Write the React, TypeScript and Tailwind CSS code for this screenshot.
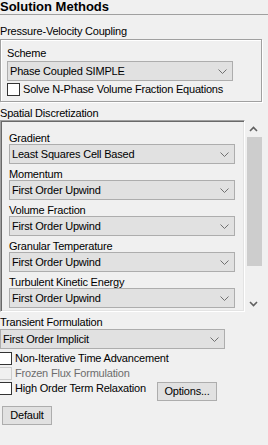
import React from "react";

const Chevron = () => (
  <svg width="9" height="5" viewBox="0 0 9 5" className="shrink-0">
    <path d="M0.5 0.5 L4.5 4.5 L8.5 0.5" fill="none" stroke="#707070" strokeWidth="1" />
  </svg>
);

function Select({ text, className }: { text: string; className: string }) {
  return (
    <div
      className={`flex h-[20px] items-center justify-between border border-[#adadad] bg-[#e1e1e1] pl-[2px] pr-[5px] ${className}`}
    >
      <span className="whitespace-nowrap">{text}</span>
      <Chevron />
    </div>
  );
}

function Check({ text, disabled, className }: { text: string; disabled?: boolean; className: string }) {
  return (
    <div className={`flex h-[15px] items-center gap-[3px] ${className}`}>
      <div
        className={`h-[13px] w-[13px] shrink-0 border ${
          disabled ? "border-[#cccccc] bg-[#f0f0f0]" : "border-[#333333] bg-white"
        }`}
      />
      <span className={`whitespace-nowrap ${disabled ? "text-[#6d6d6d]" : "text-black"}`}>{text}</span>
    </div>
  );
}

const fields: [string, string][] = [
  ["Gradient", "Least Squares Cell Based"],
  ["Momentum", "First Order Upwind"],
  ["Volume Fraction", "First Order Upwind"],
  ["Granular Temperature", "First Order Upwind"],
  ["Turbulent Kinetic Energy", "First Order Upwind"],
];

export default function App() {
  return (
    <div
      className="relative h-[445px] w-[268px] overflow-hidden bg-[#f0f0f0] text-[11px] leading-[13px] tracking-[-0.2px] text-black"
      style={{ fontFamily: '"Liberation Sans", Arial, sans-serif' }}
    >
      <div className="h-[15px] border-b border-[#a0a0a0]">
        <div className="text-[13px] font-bold leading-[14px] tracking-normal">Solution Methods</div>
      </div>

      <div className="mt-[10px] h-[13px]">Pressure-Velocity Coupling</div>
      <div className="mt-[1px] w-[262px] border border-[#a0a0a0] pb-[4px] pl-[6px] pt-[7px] shadow-[inset_1px_1px_0_#ffffff,1px_1px_0_#ffffff]">
        <div className="h-[13px]">Scheme</div>
        <Select text="Phase Coupled SIMPLE" className="mt-[1px] w-[226px]" />
        <Check text="Solve N-Phase Volume Fraction Equations" className="mt-[1px] h-[14px]" />
      </div>

      <div className="mt-[5px] h-[13px]">Spatial Discretization</div>
      <div className="flex h-[192px]">
        <div className="h-[192px] w-[245px] overflow-hidden border border-b-white border-l-[#a0a0a0] border-r-white border-t-[#a0a0a0] pl-[8px] pt-[11px] shadow-[inset_1px_1px_0_#696969,inset_-1px_-1px_0_#e3e3e3]">
          {fields.map(([label, value]) => (
            <div key={label} className="mb-[4px]">
              <div className="h-[12px] leading-[12px]">{label}</div>
              <Select text={value} className="w-[226px]" />
            </div>
          ))}
        </div>
        <div className="flex h-[192px] w-[17px] flex-col justify-between">
          <div>
            <div className="flex h-[17px] items-center justify-center">
              <svg width="9" height="6" viewBox="0 0 9 6">
                <path d="M1 5 L4.5 1.5 L8 5" fill="none" stroke="#606060" strokeWidth="1.6" />
              </svg>
            </div>
            <div className="ml-[2px] h-[129px] w-[15px] bg-[#cdcdcd]" />
          </div>
          <div className="flex h-[17px] items-center justify-center">
            <svg width="9" height="6" viewBox="0 0 9 6">
              <path d="M1 1 L4.5 4.5 L8 1" fill="none" stroke="#606060" strokeWidth="1.6" />
            </svg>
          </div>
        </div>
      </div>

      <div className="mt-[4px] h-[13px]">Transient Formulation</div>
      <Select text="First Order Implicit" className="w-[225px]" />
      <Check text="Non-Iterative Time Advancement" className="-ml-[1px] mt-[2px]" />
      <Check text="Frozen Flux Formulation" disabled className="-ml-[1px]" />
      <div className="flex items-start">
        <Check text="High Order Term Relaxation" className="-ml-[1px] w-[158px]" />
        <div className="mt-[1px] flex h-[19px] w-[60px] items-center justify-center border border-[#adadad] bg-[#e1e1e1]">
          Options...
        </div>
      </div>
      <div className="ml-[2px] mt-[5px] flex h-[19px] w-[50px] items-center justify-center border border-[#adadad] bg-[#e1e1e1]">
        Default
      </div>
    </div>
  );
}
